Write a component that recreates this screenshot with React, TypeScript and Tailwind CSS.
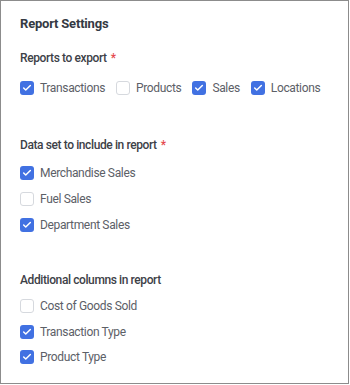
import { Check } from "lucide-react";

type Opt = { label: string; checked: boolean };

const REPORTS: Opt[] = [
  { label: "Transactions", checked: true },
  { label: "Products", checked: false },
  { label: "Sales", checked: true },
  { label: "Locations", checked: true },
];

const DATASETS: Opt[] = [
  { label: "Merchandise Sales", checked: true },
  { label: "Fuel Sales", checked: false },
  { label: "Department Sales", checked: true },
];

const COLUMNS: Opt[] = [
  { label: "Cost of Goods Sold", checked: false },
  { label: "Transaction Type", checked: true },
  { label: "Product Type", checked: true },
];

function Box({ checked }: { checked: boolean }) {
  return checked ? (
    <span className="w-[14px] h-[14px] rounded-[3px] bg-[#4171e2] flex items-center justify-center shrink-0">
      <Check size={10} strokeWidth={3.5} className="text-white" />
    </span>
  ) : (
    <span className="w-[14px] h-[14px] rounded-[3px] border border-[#d6d9de] bg-white shrink-0" />
  );
}

function Item({ opt }: { opt: Opt }) {
  return (
    <label className="flex items-center gap-[6px] h-[20px] text-[12px] tracking-[-0.35px] text-[#5c6067]">
      <Box checked={opt.checked} />
      <span>{opt.label}</span>
    </label>
  );
}

function Heading({ text, required }: { text: string; required?: boolean }) {
  return (
    <div className="h-[18px] flex items-center text-[12px] font-medium tracking-[-0.4px] text-[#3d4147]">
      {text}
      {required && <span className="text-[#e5484d] ml-[4px]">*</span>}
    </div>
  );
}

export default function App() {
  return (
    <div className="w-[349px] h-[384px] border border-[#8c8c8c] bg-white pl-[19px] pt-[13px]" style={{ fontFamily: "Roboto, 'Noto Sans', sans-serif" }}>
      <div className="h-[20px] flex items-center text-[13px] font-bold tracking-[-0.2px] text-[#343a43]">Report Settings</div>

      <div className="mt-[15px]">
        <Heading text="Reports to export" required />
      </div>
      <div className="mt-[11px] flex gap-[11px]">
        {REPORTS.map(o => <Item key={o.label} opt={o} />)}
      </div>

      <div className="mt-[38px]">
        <Heading text="Data set to include in report" required />
      </div>
      <div className="mt-[9px] flex flex-col gap-[6px]">
        {DATASETS.map(o => <Item key={o.label} opt={o} />)}
      </div>

      <div className="mt-[36px]">
        <Heading text="Additional columns in report" />
      </div>
      <div className="mt-[7px] flex flex-col gap-[5.5px]">
        {COLUMNS.map(o => <Item key={o.label} opt={o} />)}
      </div>
    </div>
  );
}
